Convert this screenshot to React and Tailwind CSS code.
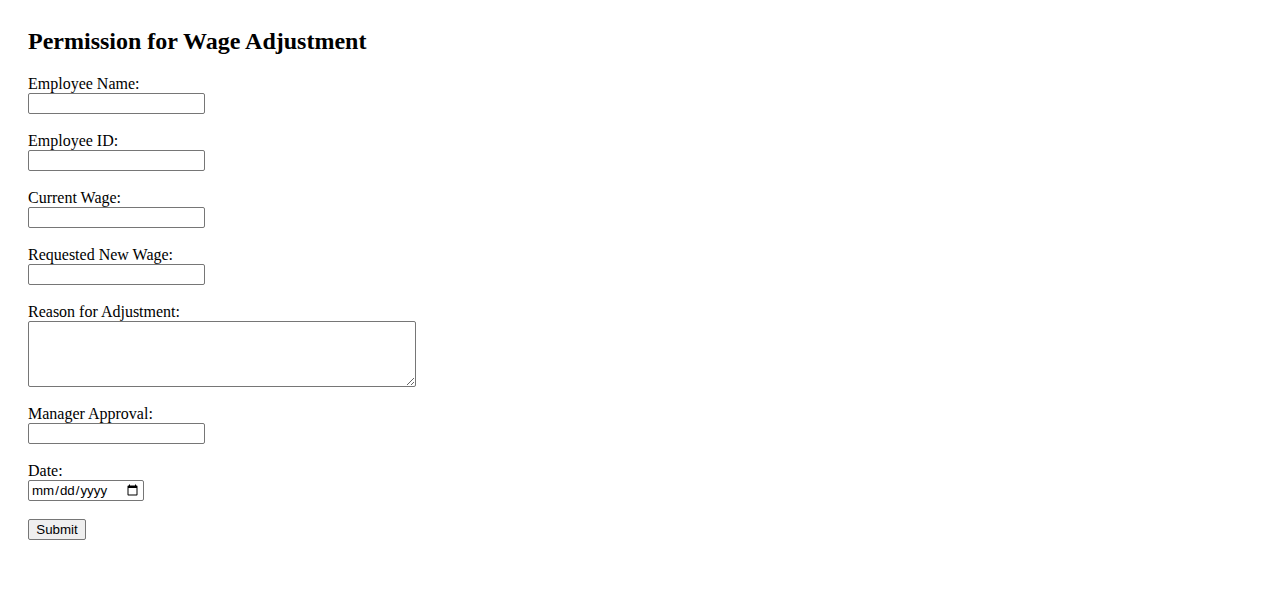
import React from 'react';

const fieldInput =
  'block w-[177px] h-[21px] border border-[#767676] rounded-[2px] bg-white px-[2px] py-[1px] text-[13.33px] font-["Liberation_Sans",Arial,sans-serif]';

const Field = ({ label, children }) => (
  <div className="mb-[18px]">
    <label className="block leading-[18px]">{label}</label>
    {children}
  </div>
);

const App = () => {
  return (
    <div className="min-h-screen bg-white text-black text-[16px] font-['Liberation_Serif','Times_New_Roman',serif] pl-[28px] pt-[27px]">
      <h2 className="text-[24px] leading-[28px] font-bold mb-[20px]">Permission for Wage Adjustment</h2>

      <form onSubmit={(e) => e.preventDefault()}>
        <Field label="Employee Name:">
          <input type="text" className={fieldInput} />
        </Field>
        <Field label="Employee ID:">
          <input type="text" className={fieldInput} />
        </Field>
        <Field label="Current Wage:">
          <input type="text" className={fieldInput} />
        </Field>
        <Field label="Requested New Wage:">
          <input type="text" className={fieldInput} />
        </Field>
        <Field label="Reason for Adjustment:">
          <textarea
            rows={4}
            className="block w-[388px] h-[66px] border border-[#767676] rounded-[2px] bg-white px-[2px] py-[2px] text-[13.33px] font-['Liberation_Mono',monospace]"
          />
        </Field>
        <Field label="Manager Approval:">
          <input type="text" className={fieldInput} />
        </Field>
        <Field label="Date:">
          <input
            type="date"
            className="block w-[116px] h-[21px] border border-[#767676] rounded-[2px] bg-white px-[2px] py-[1px] text-[13.33px] font-['Liberation_Sans',Arial,sans-serif]"
          />
        </Field>
        <button
          type="submit"
          className="block h-[21px] w-[58px] border border-[#767676] rounded-[2px] bg-[#efefef] text-[13.33px] leading-[17px] font-['Liberation_Sans',Arial,sans-serif]"
        >
          Submit
        </button>
      </form>
    </div>
  );
};

export default App;
